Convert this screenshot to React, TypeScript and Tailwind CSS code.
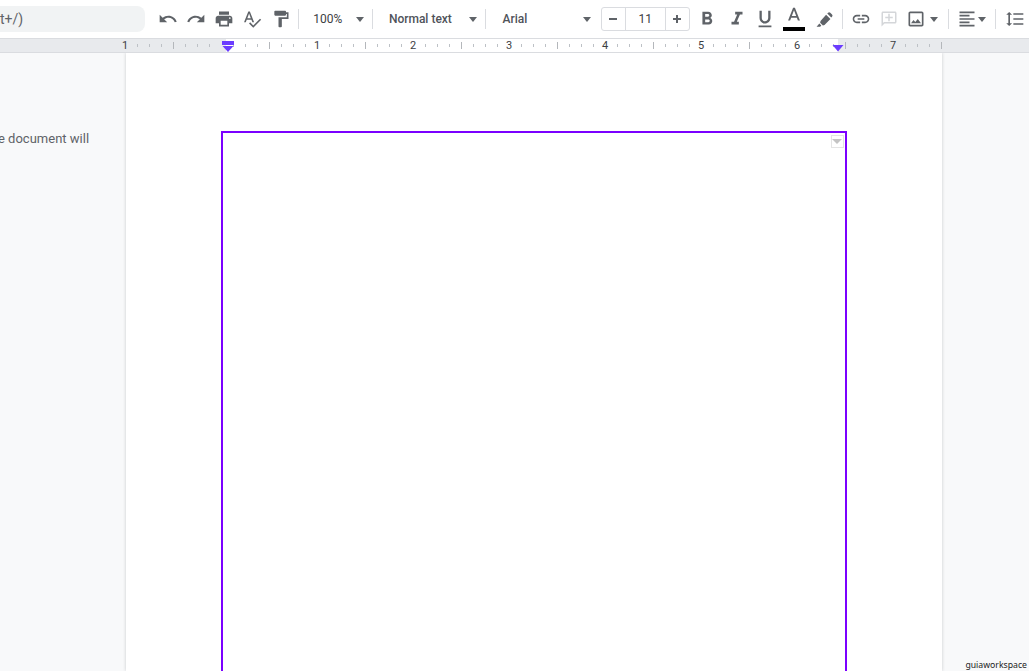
const ICONS = {
  undo: 'M12.5 8c-2.65 0-5.05.99-6.9 2.6L2 7v9h9l-3.62-3.62c1.39-1.16 3.16-1.88 5.12-1.88 3.54 0 6.55 2.31 7.6 5.5l2.37-.78C21.08 11.03 17.15 8 12.5 8z',
  redo: 'M18.4 10.6C16.55 8.99 14.15 8 11.5 8c-4.65 0-8.58 3.03-9.96 7.22L3.9 16c1.05-3.19 4.05-5.5 7.6-5.5 1.95 0 3.73.72 5.12 1.88L13 16h9V7l-3.6 3.6z',
  print: 'M19 8H5c-1.66 0-3 1.34-3 3v6h4v4h12v-4h4v-6c0-1.66-1.34-3-3-3zm-3 11H8v-5h8v5zm3-7c-.55 0-1-.45-1-1s.45-1 1-1 1 .45 1 1-.45 1-1 1zm-1-9H6v4h12V3z',
  spell: 'M12.45 16h2.09L9.43 3H7.57L2.46 16h2.09l1.12-3h5.64l1.14 3zm-6.02-5L8.5 5.48 10.57 11H6.43zm15.16.59l-8.09 8.09L9.83 16l-1.41 1.41 5.09 5.09L23 13l-1.41-1.41z',
  paint: 'M18 4V3c0-.55-.45-1-1-1H5c-.55 0-1 .45-1 1v4c0 .55.45 1 1 1h12c.55 0 1-.45 1-1V6h1v4H9v11c0 .55.45 1 1 1h2c.55 0 1-.45 1-1v-9h8V4h-3z',
  bold: 'M15.6 10.79c.97-.67 1.65-1.77 1.65-2.79 0-2.26-1.75-4-4-4H7v14h7.04c2.09 0 3.71-1.7 3.71-3.79 0-1.52-.86-2.82-2.15-3.42zM10 6.5h3c.83 0 1.5.67 1.5 1.5s-.67 1.5-1.5 1.5h-3v-3zm3.5 9H10v-3h3.5c.83 0 1.5.67 1.5 1.5s-.67 1.5-1.5 1.5z',
  italic: 'M10 4v3h2.21l-3.42 8H6v3h8v-3h-2.21l3.42-8H18V4z',
  underline: 'M12 17c3.31 0 6-2.69 6-6V3h-2.5v8c0 1.93-1.57 3.5-3.5 3.5S8.5 12.93 8.5 11V3H6v8c0 3.31 2.69 6 6 6zm-7 2v2h14v-2H5z',
  colorA: 'M11 3L5.5 17h2.25l1.12-3h6.25l1.12 3h2.25L13 3h-2zm-1.38 9L12 5.67 14.38 12H9.62z',
  marker: 'M15.5 4.5l1-1a2 2 0 0 1 2.8 0l2.2 2.2a2 2 0 0 1 0 2.8l-1 1zM14 6l5.5 5.5-7.5 7.5-2 .5-3.5-3.5.5-2zM5.5 17l2.5 2.5-1.5 1.5H2z',
  link: 'M3.9 12c0-1.71 1.39-3.1 3.1-3.1h4V7H7c-2.76 0-5 2.24-5 5s2.24 5 5 5h4v-1.9H7c-1.71 0-3.1-1.39-3.1-3.1zM8 13h8v-2H8v2zm9-6h-4v1.9h4c1.71 0 3.1 1.39 3.1 3.1s-1.39 3.1-3.1 3.1h-4V17h4c2.76 0 5-2.24 5-5s-2.24-5-5-5z',
  comment: 'M20 2H4c-1.1 0-2 .9-2 2v18l4-4h14c1.1 0 2-.9 2-2V4c0-1.1-.9-2-2-2zm0 14H5.17L4 17.17V4h16v12zM13 5h-2v4H7v2h4v4h2v-4h4V9h-4z',
  image: 'M19 5v14H5V5h14m0-2H5c-1.1 0-2 .9-2 2v14c0 1.1.9 2 2 2h14c1.1 0 2-.9 2-2V5c0-1.1-.9-2-2-2zm-4.86 8.86l-3 3.87L9 13.14 6 17h12l-3.86-5.14z',
  align: 'M15 15H3v2h12v-2zm0-8H3v2h12V7zM3 13h18v-2H3v2zm0 8h18v-2H3v2zM3 3v2h18V3H3z',
  spacing: 'M6 7h2.5L5 3.5 1.5 7H4v10H1.5L5 20.5 8.5 17H6V7zm4-2v2h12V5H10zm0 14h12v-2H10v2zm0-6h12v-2H10v2z',
  minus: 'M18 13.5H6v-3h12z',
  plus: 'M18 13.5h-4.5V18h-3v-4.5H6v-3h4.5V6h3v4.5H18z',
};

type IconName = keyof typeof ICONS;

function Icon({ name, className = 'w-5 h-5 fill-[#5f6368]' }: { name: IconName; className?: string }) {
  return (
    <svg viewBox="0 0 24 24" className={className}>
      <path d={ICONS[name]} />
    </svg>
  );
}

function ToolButton({ name, className = '', iconClass }: { name: IconName; className?: string; iconClass?: string }) {
  return (
    <div className={`w-[28.25px] h-6 flex items-center justify-center shrink-0 ${className}`}>
      <Icon name={name} className={iconClass} />
    </div>
  );
}

function Caret({ className = '' }: { className?: string }) {
  return <div className={`w-0 h-0 shrink-0 border-x-[4.5px] border-x-transparent border-t-[5px] border-t-[#5f6368] ${className}`} />;
}

function Sep({ className = '' }: { className?: string }) {
  return <div className={`w-px h-5 bg-[#dadce0] shrink-0 ${className}`} />;
}

function Toolbar() {
  return (
    <div className="flex items-center h-[38px] bg-white font-['Roboto',sans-serif] text-[#444746] overflow-hidden">
      <div className="w-[145px] h-[26px] shrink-0 bg-[#f1f3f4] rounded-r-lg flex items-center text-sm text-[#5f6368]">
        t+/)
      </div>
      <ToolButton name="undo" className="ml-[8.5px]" />
      <ToolButton name="redo" />
      <ToolButton name="print" />
      <ToolButton name="spell" />
      <ToolButton name="paint" />
      <Sep className="ml-[3px]" />
      <span className="ml-[14.5px] w-[30px] text-xs leading-none text-[#3c4043]">100%</span>
      <Caret className="ml-[13px]" />
      <Sep className="ml-[8px]" />
      <span className="ml-4 w-[64px] text-xs leading-none font-medium text-[#50535a] whitespace-nowrap">Normal text</span>
      <Caret className="ml-[17px]" />
      <Sep className="ml-[8px]" />
      <span className="ml-[16.5px] w-[26px] text-xs leading-none font-medium text-[#50535a]">Arial</span>
      <Caret className="ml-[54.5px]" />
      <div className="ml-[10px] w-[89px] h-6 shrink-0 flex items-center border border-[#dadce0] rounded-[3px]">
        <div className="w-[23px] h-full flex items-center justify-center">
          <Icon name="minus" className="w-4 h-4 fill-[#5f6368]" />
        </div>
        <div className="w-[41px] h-full flex items-center justify-center border-x border-[#dadce0] text-xs text-[#3c4043]">11</div>
        <div className="flex-1 h-full flex items-center justify-center">
          <Icon name="plus" className="w-4 h-4 fill-[#5f6368]" />
        </div>
      </div>
      <ToolButton name="bold" className="ml-[3.5px]" iconClass="w-[22px] h-[22px] fill-[#5f6368]" />
      <ToolButton name="italic" className="ml-px" iconClass="w-[22px] h-[22px] fill-[#5f6368]" />
      <ToolButton name="underline" iconClass="w-[22px] h-[22px] fill-[#5f6368]" />
      <div className="ml-[0.5px] w-[29px] h-6 shrink-0 flex flex-col items-center">
        <Icon name="colorA" className="w-[22px] h-[22px] shrink-0 fill-[#5f6368] mt-[-2px]" />
        <div className="w-[22px] h-1 shrink-0 bg-black" />
      </div>
      <ToolButton name="marker" className="ml-[1.5px]" iconClass="w-[19px] h-[19px] fill-[#5f6368]" />
      <Sep className="ml-[3.5px]" />
      <ToolButton name="link" className="ml-[4px]" />
      <ToolButton name="comment" iconClass="w-[18px] h-[18px] fill-[#d4d6d9]" />
      <ToolButton name="image" className="-ml-[1px]" />
      <Caret className="ml-[-1px]" />
      <Sep className="ml-[10px]" />
      <ToolButton name="align" className="ml-[4px]" />
      <Caret className="ml-[-3px]" />
      <Sep className="ml-[9px]" />
      <ToolButton name="spacing" className="ml-[5px]" />
    </div>
  );
}

const RULER_LABELS = [
  { label: '1', x: 125 },
  { label: '1', x: 317 },
  { label: '2', x: 413 },
  { label: '3', x: 509 },
  { label: '4', x: 605 },
  { label: '5', x: 701 },
  { label: '6', x: 797 },
  { label: '7', x: 893 },
];

function rulerTicks() {
  const ticks: { x: number; long: boolean }[] = [];
  for (let x = 137; x <= 941; x += 12) {
    const step = Math.round((x - 125) / 12) % 8;
    if (step === 0) continue;
    ticks.push({ x, long: step === 4 });
  }
  return ticks;
}

function Ruler() {
  return (
    <div className="relative h-[15px] bg-[#e8eaed] border-y border-[#dadce0] font-['Roboto',sans-serif] overflow-visible">
      <div className="absolute left-[226px] w-[612px] top-0 bottom-0 bg-white" />
      <svg width="1029" height="13" className="absolute left-0 top-0">
        {rulerTicks().map(t => (
          <rect
            key={t.x}
            x={t.x}
            y={t.long ? 3 : 5}
            width="1"
            height={t.long ? 7 : 3}
            fill={t.long ? '#b4b7bb' : '#bdc1c6'}
          />
        ))}
      </svg>
      {RULER_LABELS.map(l => (
        <span
          key={l.x}
          className="absolute top-0 -translate-x-1/2 text-[11px] leading-[13px] text-[#3c4043]"
          style={{ left: l.x }}
        >
          {l.label}
        </span>
      ))}
      <svg width="14" height="12" viewBox="0 0 14 12" className="absolute left-[221px] top-[1px]">
        <rect x="1" y="1" width="12" height="4" fill="#6b3cff" />
        <path d="M1.5 6h11L7 12z" fill="#6b3cff" />
      </svg>
      <svg width="14" height="8" viewBox="0 0 14 8" className="absolute left-[831px] top-[6px]">
        <path d="M1.5 0h11L7 6.5z" fill="#6b3cff" />
      </svg>
    </div>
  );
}

export default function App() {
  return (
    <div className="relative w-[1029px] h-[671px] overflow-hidden bg-[#f8f9fa]">
      <Toolbar />
      <Ruler />
      <div className="flex h-[618px]">
        <div className="w-[126px] shrink-0 pt-[78px] font-['Roboto',sans-serif] text-[13px] leading-4 text-[#5f6368] -ml-[2px] whitespace-nowrap">
          e document will
        </div>
        <div className="w-[816px] ml-[2px] shrink-0 bg-white shadow-[0_0_3px_rgba(60,64,67,0.25)] pl-[95px] pt-[78px]">
          <div className="relative w-[626px] h-[700px] border-2 border-[#7b00ff]">
            <div className="absolute top-[2px] right-[1.5px] w-[13px] h-[13px] border border-[#e4e4e4] flex items-center justify-center">
              <div className="w-0 h-0 border-x-[5px] border-x-transparent border-t-[5px] border-t-[#c4c4c4]" />
            </div>
          </div>
        </div>
      </div>
      <div className="absolute right-[2px] bottom-0 font-['Noto_Sans',sans-serif] text-[8.7px] leading-[12px] text-[#222]">
        guiaworkspace
      </div>
    </div>
  );
}
